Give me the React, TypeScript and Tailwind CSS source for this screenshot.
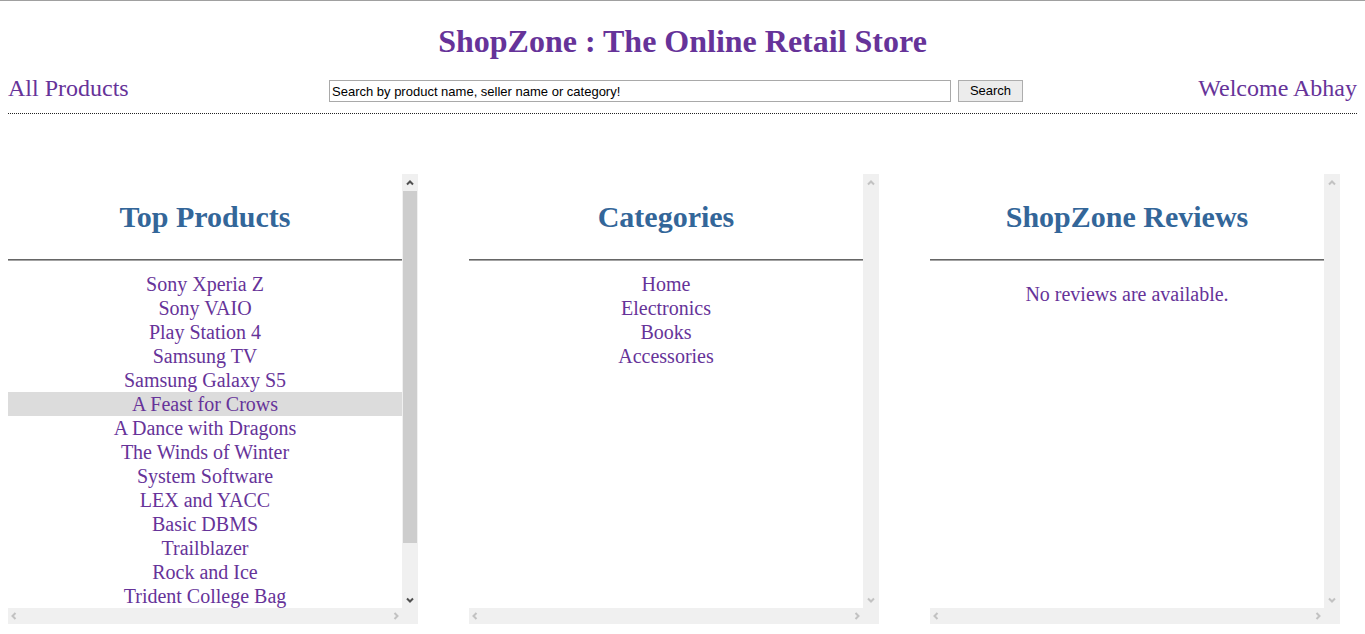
import type { ReactNode } from 'react';

const topProducts = [
  'Sony Xperia Z',
  'Sony VAIO',
  'Play Station 4',
  'Samsung TV',
  'Samsung Galaxy S5',
  'A Feast for Crows',
  'A Dance with Dragons',
  'The Winds of Winter',
  'System Software',
  'LEX and YACC',
  'Basic DBMS',
  'Trailblazer',
  'Rock and Ice',
  'Trident College Bag',
];

const categories = ['Home', 'Electronics', 'Books', 'Accessories'];

// small scrollbar arrow, drawn as a chevron
function Chevron({ dir, dark }: { dir: 'up' | 'down' | 'left' | 'right'; dark?: boolean }) {
  const paths = {
    up: 'M1 5.5 L4 2.5 L7 5.5',
    down: 'M1 2.5 L4 5.5 L7 2.5',
    left: 'M5.5 1 L2.5 4 L5.5 7',
    right: 'M2.5 1 L5.5 4 L2.5 7',
  };
  return (
    <svg width="8" height="8" viewBox="0 0 8 8">
      <path d={paths[dir]} fill="none" stroke={dark ? '#505050' : '#c2c2c2'} strokeWidth="2" />
    </svg>
  );
}

function VScroll({ active }: { active?: boolean }) {
  return (
    <div className="w-4 bg-[#f0f0f0] flex flex-col">
      <div className="h-[17px] flex items-center justify-center">
        <Chevron dir="up" dark={active} />
      </div>
      {active && <div className="h-[352px] mx-px bg-[#cdcdcd]" />}
      <div className="flex-1" />
      <div className="h-[17px] flex items-center justify-center">
        <Chevron dir="down" dark={active} />
      </div>
    </div>
  );
}

function Panel({ title, active, children }: { title: string; active?: boolean; children: ReactNode }) {
  return (
    <div className="w-[410px] h-[450px] flex flex-col">
      <div className="flex flex-1 min-h-0">
        <div className="flex-1 overflow-hidden pt-[25px]">
          <h2 className="text-center text-[30px] leading-[36px] font-bold text-[#336699]">{title}</h2>
          <div className="mt-[24px] border-t border-b border-t-[#666666] border-b-[#a3a3a3]" />
          {children}
        </div>
        <VScroll active={active} />
      </div>
      <div className="flex h-4">
        <div className="flex-1 bg-[#f0f0f0] flex items-center justify-between px-[2px]">
          <Chevron dir="left" />
          <Chevron dir="right" />
        </div>
        <div className="w-4 bg-[#f0f0f0]" />
      </div>
    </div>
  );
}

export default function App() {
  return (
    <div className="min-h-screen bg-white border-t border-[#a0a0a0] font-['Liberation_Serif',serif] text-[#663399]">
      {/* Title */}
      <h1 className="pt-[22px] text-center text-[32px] leading-[36px] font-bold">
        ShopZone : The Online Retail Store
      </h1>

      {/* Header row */}
      <div className="px-2 mt-[15px]">
        <div className="flex items-start">
          <div className="w-[321px] text-[24px] leading-[28px]">All Products</div>
          <input
            readOnly
            defaultValue="Search by product name, seller name or category!"
            className="mt-[6px] w-[622px] h-[22px] border border-[#a9a9a9] px-[2px] text-[13px] text-black font-['Liberation_Sans',sans-serif] outline-none"
          />
          <button className="mt-[6px] ml-[7px] w-[65px] h-[22px] border border-[#adadad] bg-[#ececec] text-[13px] text-black font-['Liberation_Sans',sans-serif]">
            Search
          </button>
          <div className="flex-1 text-right text-[24px] leading-[28px]">Welcome Abhay</div>
        </div>
        <div className="mt-[11px] border-t border-dotted border-[#222222]" />
      </div>

      {/* Panels */}
      <div className="px-2 mt-[60px] flex gap-[51px]">
        <Panel title="Top Products" active>
          <ul className="mt-[11px]">
            {topProducts.map((p) => (
              <li
                key={p}
                className={`text-center text-[20px] leading-[24px] ${p === 'A Feast for Crows' ? 'bg-[#dcdcdc]' : ''}`}
              >
                {p}
              </li>
            ))}
          </ul>
        </Panel>
        <Panel title="Categories">
          <ul className="mt-[11px]">
            {categories.map((c) => (
              <li key={c} className="text-center text-[20px] leading-[24px]">
                {c}
              </li>
            ))}
          </ul>
        </Panel>
        <Panel title="ShopZone Reviews">
          <p className="mt-[21px] text-center text-[20px] leading-[24px]">No reviews are available.</p>
        </Panel>
      </div>
    </div>
  );
}
